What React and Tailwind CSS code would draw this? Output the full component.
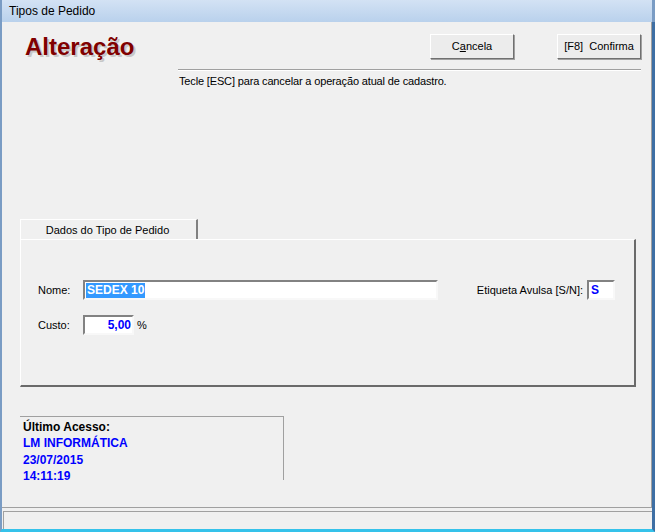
import React from "react";

const sunken =
  "border-2 border-t-[#828282] border-l-[#828282] border-r-[#f8f8f8] border-b-[#f8f8f8] bg-white";

export default function App() {
  return (
    <div
      className="w-[655px] h-[532px] flex flex-col bg-[#f0f0f0] text-black overflow-hidden"
      style={{ fontFamily: '"Liberation Sans", Arial, sans-serif' }}
    >
      {/* Title bar */}
      <div className="h-[22px] shrink-0 flex items-center pl-[7px] text-[12px] bg-gradient-to-b from-[#d3e2f4] to-[#b9d1ec] border-l-2 border-r-[3px] border-[#7a9cc4]">
        Tipos de Pedido
      </div>

      {/* Window frame */}
      <div className="flex-1 flex flex-col border-l-2 border-r-[3px] border-b-[3px] border-l-[#7a9cc4] border-r-[#3e6fa4] border-b-[#35c2ea]">
        {/* Body */}
        <div className="flex-1 flex flex-col border-r border-b border-[#a0a0a0]">
          {/* Header */}
          <div className="flex items-start mt-[12px] pr-[10px]">
            <div
              className="ml-[23px] mt-[-1px] text-[24px] leading-[27px] font-bold text-[#800000]"
              style={{ textShadow: "2px 2px 0 #c8c8c8" }}
            >
              Alteração
            </div>
            <div className="flex-1" />
            <button className="w-[84px] h-[25px] text-[11px] bg-[#ececec] border border-t-white border-l-white border-r-[#707070] border-b-[#707070] shadow-[1px_1px_0_#a0a0a0]">
              C<span className="underline">a</span>ncela
            </button>
            <button className="ml-[43px] w-[84px] h-[25px] text-[11px] bg-[#ececec] border border-t-white border-l-white border-r-[#707070] border-b-[#707070] shadow-[1px_1px_0_#a0a0a0]">
              [F8]&nbsp;&nbsp;Confirma
            </button>
          </div>

          <div className="ml-[176px] mr-[10px] mt-[9px] border-t border-t-[#a0a0a0] border-b border-b-white" />
          <div className="ml-[177px] mt-[4px] text-[11px] leading-[13px] tracking-[-0.15px]">
            Tecle [ESC] para cancelar a operação atual de cadastro.
          </div>

          {/* Tab */}
          <div className="ml-[18px] mr-[15px] mt-[131px] flex flex-col">
            <div className="w-[178px] h-[21px] flex items-center justify-center text-[11px] border-t border-l border-r-2 border-t-white border-l-white border-r-[#808080] pr-[2px]">
              Dados do Tipo de Pedido
            </div>
            <div className="h-[148px] flex flex-col border-t border-l border-t-white border-l-white border-r-2 border-b-2 border-r-[#6a6a6a] border-b-[#6a6a6a] -mt-[1px]">
              <div className="flex items-center mt-[40px] h-[20px]">
                <span className="ml-[17px] w-[45px] text-[11px]">Nome:</span>
                <div className={`${sunken} w-[355px] h-[20px] flex items-center pl-[1px]`}>
                  <span className="bg-[#3399ff] text-white font-bold text-[12px] leading-[15px] px-[1px]">
                    SEDEX 10
                  </span>
                </div>
                <div className="flex-1" />
                <span className="text-[11px] mr-[4px]">Etiqueta Avulsa [S/N]:</span>
                <div className={`${sunken} w-[28px] h-[20px] flex items-center pl-[2px] mr-[19px]`}>
                  <span className="text-[#0000ff] font-bold text-[12px]">S</span>
                </div>
              </div>
              <div className="flex items-center mt-[15px] h-[20px]">
                <span className="ml-[17px] w-[45px] text-[11px]">Custo:</span>
                <div className={`${sunken} w-[51px] h-[20px] flex items-center justify-end pr-[1px]`}>
                  <span className="text-[#0000ff] font-bold text-[12px]">5,00</span>
                </div>
                <span className="ml-[3px] text-[11px]">%</span>
              </div>
            </div>
          </div>

          {/* Último acesso */}
          <div className="ml-[18px] mt-[29px] w-[264px] h-[64px] border-t border-r border-[#a0a0a0] pl-[3px] pt-[2px] text-[12px] font-bold leading-[16.3px]">
            <div>Último Acesso:</div>
            <div className="text-[#0000ff]">LM INFORMÁTICA</div>
            <div className="text-[#0000ff]">23/07/2015</div>
            <div className="text-[#0000ff]">14:11:19</div>
          </div>
          <div className="flex-1" />
        </div>

        {/* Status bar */}
        <div className="h-[18px] shrink-0 mt-[3px] ml-[1px] border-t border-l border-[#a0a0a0]" />
      </div>
    </div>
  );
}
